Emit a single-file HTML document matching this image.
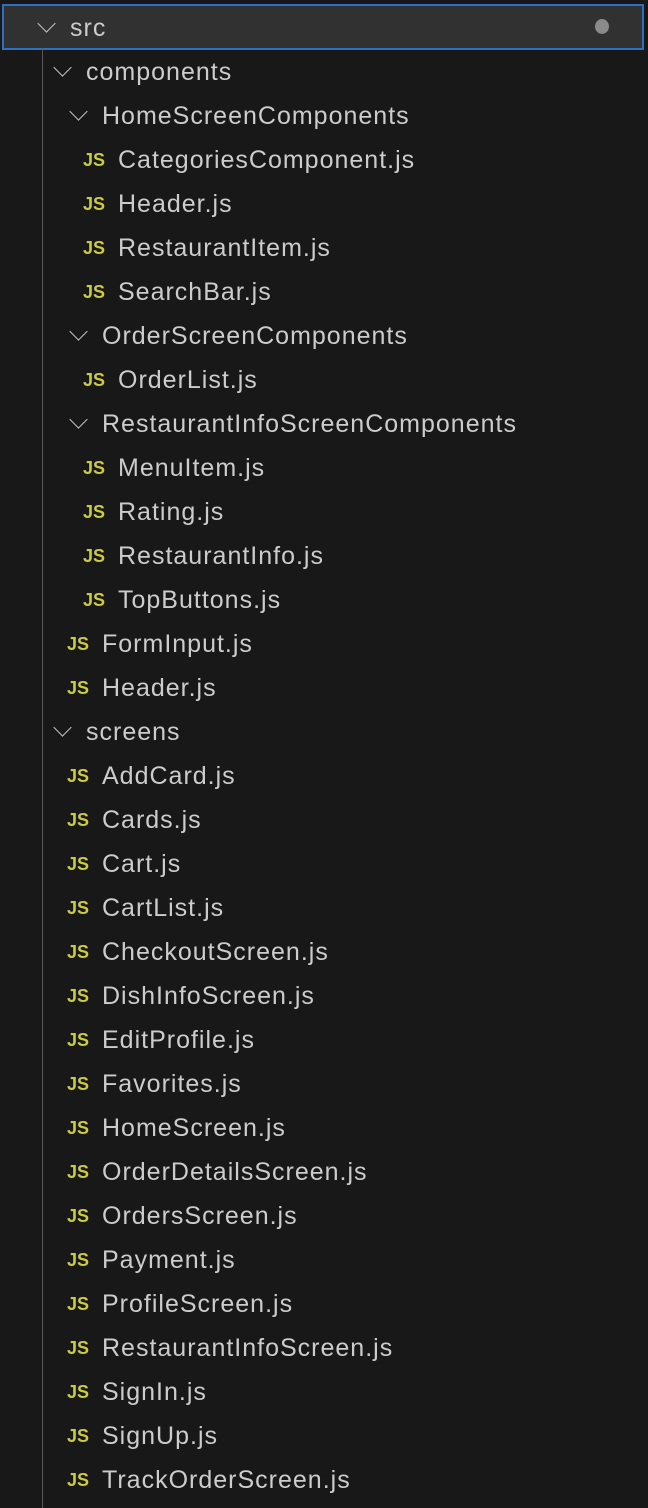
<!DOCTYPE html>
<html><head><style>
body{margin:0;width:648px;height:1508px;background:#181818;font-family:"Liberation Sans",sans-serif;overflow:hidden;position:relative}
.r{position:absolute;left:0;width:648px;height:44px;line-height:44px;color:#cccccc;font-size:25px;letter-spacing:1px;white-space:nowrap}
.r span{position:absolute;top:1px}
.js{color:#cbcb41;font-weight:bold;font-size:18px;letter-spacing:0px}
.chev{position:absolute;top:12px;width:12px;height:12px;border-right:1.5px solid #c5c5c5;border-bottom:1.5px solid #c5c5c5;transform:rotate(45deg)}
.guide{position:absolute;left:42px;top:48px;width:1px;height:1460px;background:#585858}
</style></head><body>
<div style="position:absolute;left:2px;top:4px;width:638px;height:42px;border:2px solid #2f6fbf;background:#313131"></div>
<div class="guide"></div>
<div id="c"></div>
<script>
var rows=[
[0,'d','src'],[1,'d','components'],[2,'d','HomeScreenComponents'],
[3,'f','CategoriesComponent.js'],[3,'f','Header.js'],[3,'f','RestaurantItem.js'],[3,'f','SearchBar.js'],
[2,'d','OrderScreenComponents'],[3,'f','OrderList.js'],
[2,'d','RestaurantInfoScreenComponents'],[3,'f','MenuItem.js'],[3,'f','Rating.js'],[3,'f','RestaurantInfo.js'],[3,'f','TopButtons.js'],
[2,'f','FormInput.js'],[2,'f','Header.js'],[1,'d','screens'],
[2,'f','AddCard.js'],[2,'f','Cards.js'],[2,'f','Cart.js'],[2,'f','CartList.js'],[2,'f','CheckoutScreen.js'],[2,'f','DishInfoScreen.js'],[2,'f','EditProfile.js'],[2,'f','Favorites.js'],[2,'f','HomeScreen.js'],[2,'f','OrderDetailsScreen.js'],[2,'f','OrdersScreen.js'],[2,'f','Payment.js'],[2,'f','ProfileScreen.js'],[2,'f','RestaurantInfoScreen.js'],[2,'f','SignIn.js'],[2,'f','SignUp.js'],[2,'f','TrackOrderScreen.js']];
var h='';
rows.forEach(function(r,i){
 var top=5+44*i, L=r[0], txt;
 if(r[1]=='d'){var cx=40+16*L;txt=70+16*L;
  h+='<div class="r" style="top:'+top+'px"><div class="chev" style="left:'+cx+'px"></div><span style="left:'+(txt)+'px">'+r[2]+'</span></div>';}
 else{var jx=67+16*(L-2);
  h+='<div class="r" style="top:'+top+'px"><span class="js" style="left:'+jx+'px">JS</span><span style="left:'+(jx+35)+'px">'+r[2]+'</span></div>';}
});
document.getElementById('c').innerHTML=h;
</script>
<div style="position:absolute;left:595px;top:19px;width:14px;height:15px;border-radius:50%;background:#8a8a8a"></div>
</body></html>
